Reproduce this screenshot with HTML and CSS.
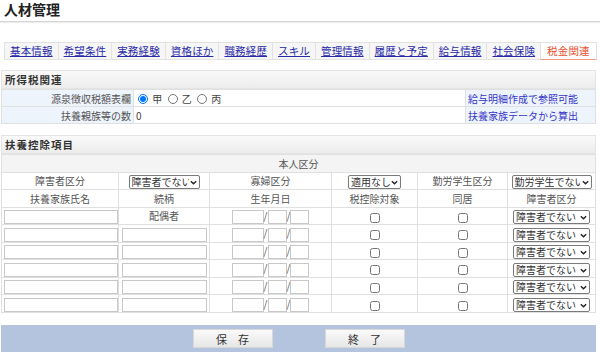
FILE: index.html
```html
<!DOCTYPE html>
<html>
<head>
    <title>人材管理</title>
    <link rel="stylesheet" href="styles.css">
</head>
<body>
    <!-- タイトル -->
    <div class="page-title">人材管理</div>

    <!-- タブ -->
    <ul class="tabs">
        <li><a href="#">基本情報</a></li>
        <li><a href="#">希望条件</a></li>
        <li><a href="#">実務経験</a></li>
        <li><a href="#">資格ほか</a></li>
        <li><a href="#">職務経歴</a></li>
        <li><a href="#">スキル</a></li>
        <li><a href="#">管理情報</a></li>
        <li><a href="#">履歴と予定</a></li>
        <li><a href="#">給与情報</a></li>
        <li><a href="#">社会保険</a></li>
        <li class="active"><span>税金関連</span></li>
    </ul>

    <!-- 所得税関連 -->
    <div class="section">
        <div class="section-head">所得税関連</div>
        <table class="info-table">
            <colgroup>
                <col class="c-label">
                <col>
                <col class="c-link">
            </colgroup>
            <tr>
                <th>源泉徴収税額表欄</th>
                <td>
                    <label><input type="radio" name="kou" checked> 甲</label>
                    <label><input type="radio" name="kou"> 乙</label>
                    <label><input type="radio" name="kou"> 丙</label>
                </td>
                <td class="link-cell"><a href="#">給与明細作成で参照可能</a></td>
            </tr>
            <tr>
                <th>扶養親族等の数</th>
                <td>0</td>
                <td class="link-cell"><a href="#">扶養家族データから算出</a></td>
            </tr>
        </table>
    </div>

    <!-- 扶養控除項目 -->
    <div class="section section-fuyou">
        <div class="section-head">扶養控除項目</div>
        <table class="grid-table">
            <colgroup>
                <col style="width:117px">
                <col style="width:91px">
                <col style="width:122px">
                <col style="width:86px">
                <col style="width:90px">
                <col>
            </colgroup>
            <tr class="row-gray">
                <td colspan="6">本人区分</td>
            </tr>
            <tr>
                <td>障害者区分</td>
                <td><span class="sel"><select class="sel-shogai"><option>障害者でない</option></select><svg viewBox="0 0 8 5"><path d="M1 1 L4 4 L7 1"/></svg></span></td>
                <td>寡婦区分</td>
                <td><span class="sel"><select class="sel-kafu"><option>適用なし</option></select><svg viewBox="0 0 8 5"><path d="M1 1 L4 4 L7 1"/></svg></span></td>
                <td>勤労学生区分</td>
                <td><span class="sel"><select class="sel-kinro"><option>勤労学生でない</option></select><svg viewBox="0 0 8 5"><path d="M1 1 L4 4 L7 1"/></svg></span></td>
            </tr>
            <tr>
                <td>扶養家族氏名</td>
                <td>続柄</td>
                <td>生年月日</td>
                <td>税控除対象</td>
                <td>同居</td>
                <td>障害者区分</td>
            </tr>
            <tr class="data-row">
                <td><input type="text" class="in-name"></td>
                <td>配偶者</td>
                <td><input type="text" class="in-y">/<input type="text" class="in-md">/<input type="text" class="in-md"></td>
                <td><input type="checkbox"></td>
                <td><input type="checkbox"></td>
                <td><span class="sel"><select class="sel-row"><option>障害者でない</option></select><svg viewBox="0 0 8 5"><path d="M1 1 L4 4 L7 1"/></svg></span></td>
            </tr>
            <tr class="data-row">
                <td><input type="text" class="in-name"></td>
                <td><input type="text" class="in-rel"></td>
                <td><input type="text" class="in-y">/<input type="text" class="in-md">/<input type="text" class="in-md"></td>
                <td><input type="checkbox"></td>
                <td><input type="checkbox"></td>
                <td><span class="sel"><select class="sel-row"><option>障害者でない</option></select><svg viewBox="0 0 8 5"><path d="M1 1 L4 4 L7 1"/></svg></span></td>
            </tr>
            <tr class="data-row">
                <td><input type="text" class="in-name"></td>
                <td><input type="text" class="in-rel"></td>
                <td><input type="text" class="in-y">/<input type="text" class="in-md">/<input type="text" class="in-md"></td>
                <td><input type="checkbox"></td>
                <td><input type="checkbox"></td>
                <td><span class="sel"><select class="sel-row"><option>障害者でない</option></select><svg viewBox="0 0 8 5"><path d="M1 1 L4 4 L7 1"/></svg></span></td>
            </tr>
            <tr class="data-row">
                <td><input type="text" class="in-name"></td>
                <td><input type="text" class="in-rel"></td>
                <td><input type="text" class="in-y">/<input type="text" class="in-md">/<input type="text" class="in-md"></td>
                <td><input type="checkbox"></td>
                <td><input type="checkbox"></td>
                <td><span class="sel"><select class="sel-row"><option>障害者でない</option></select><svg viewBox="0 0 8 5"><path d="M1 1 L4 4 L7 1"/></svg></span></td>
            </tr>
            <tr class="data-row">
                <td><input type="text" class="in-name"></td>
                <td><input type="text" class="in-rel"></td>
                <td><input type="text" class="in-y">/<input type="text" class="in-md">/<input type="text" class="in-md"></td>
                <td><input type="checkbox"></td>
                <td><input type="checkbox"></td>
                <td><span class="sel"><select class="sel-row"><option>障害者でない</option></select><svg viewBox="0 0 8 5"><path d="M1 1 L4 4 L7 1"/></svg></span></td>
            </tr>
            <tr class="data-row">
                <td><input type="text" class="in-name"></td>
                <td><input type="text" class="in-rel"></td>
                <td><input type="text" class="in-y">/<input type="text" class="in-md">/<input type="text" class="in-md"></td>
                <td><input type="checkbox"></td>
                <td><input type="checkbox"></td>
                <td><span class="sel"><select class="sel-row"><option>障害者でない</option></select><svg viewBox="0 0 8 5"><path d="M1 1 L4 4 L7 1"/></svg></span></td>
            </tr>
        </table>
    </div>

    <!-- ボタン -->
    <div class="button-bar">
        <button type="button">保　存</button>
        <button type="button">終　了</button>
    </div>
</body>
</html>
```

FILE: styles.css
```css
body {
    margin: 0;
    padding: 0;
    font-family: "Noto Sans CJK JP", "Noto Sans", sans-serif;
    font-size: 10px;
    color: #444;
}

/* タイトル */
.page-title {
    font-size: 14px;
    font-weight: bold;
    color: #222;
    padding: 0 4px;
    height: 21px;
    line-height: 18px;
    border-bottom: 1px solid #d4d4d4;
    box-shadow: 0 1px 1px #eee;
}

/* タブ */
.tabs {
    list-style: none;
    display: flex;
    margin: 20px 3px 0 4px;
    padding: 0;
    height: 18px;
}
.tabs li {
    flex-shrink: 0;
    white-space: nowrap;
    border: 1px solid #e2e2e2;
    border-right: none;
    background-color: #f6f6f6;
    padding: 0 5px;
    font-size: 10.5px;
    letter-spacing: 0.15px;
    line-height: 16px;
}
.tabs li:last-child {
    border-right: 1px solid #e2e2e2;
}
.tabs li a {
    color: #2a2aa8;
    text-decoration: underline;
}
.tabs li.active {
    background-color: #fff;
    color: #e8502c;
    border-bottom: 1px solid #f39a80;
    padding: 0 6px;
}

/* セクション */
.section {
    margin: 10px 4px 0 1px;
}
.section-fuyou {
    margin-top: 11px;
}
.section-head {
    font-size: 10.5px;
    font-weight: bold;
    color: #333;
    height: 17px;
    line-height: 17px;
    padding-left: 3px;
    border: 1px solid #e4e4e4;
    background: linear-gradient(#fafafa, #ececec);
    letter-spacing: 1px;
}

table {
    width: 100%;
    border-collapse: collapse;
    table-layout: fixed;
}
td, th {
    border: 1px solid #e0e0e0;
    padding: 0;
    height: 16px;
    font-weight: normal;
    white-space: nowrap;
}

/* 所得税関連 */
.info-table .c-label {
    width: 132px;
}
.info-table .c-link {
    width: 130px;
}
.info-table th {
    background-color: #eef4fc;
    text-align: right;
    padding-right: 2px;
    color: #555;
}
.info-table td {
    padding-left: 2px;
}
.info-table label {
    margin-right: 1px;
}
.info-table input[type="radio"] {
    width: 10px;
    height: 10px;
    margin: 0 2px 0 2px;
    vertical-align: -1px;
}
.link-cell {
    background-color: #eef4fc;
}
.link-cell a {
    color: #3636c8;
    text-decoration: none;
}

/* 扶養控除項目 */
.grid-table td {
    text-align: center;
    height: 16.5px;
    color: #555;
}
.grid-table .row-gray td {
    background-color: #f4f4f4;
}
.grid-table .data-row td {
    height: 16.6px;
}
.grid-table .data-row td:first-child {
    text-align: left;
    padding-left: 2px;
}

/* セレクト */
.sel {
    position: relative;
    display: inline-block;
    vertical-align: middle;
    line-height: 0;
}
.sel select {
    appearance: none;
    -webkit-appearance: none;
    font-family: inherit;
    font-size: 10px;
    height: 14px;
    line-height: 12px;
    padding: 0 10px 0 2px;
    margin: 0;
    border: 1px solid #7a7a7a;
    border-radius: 2px;
    background-color: #fff;
    color: #333;
    text-align: left;
}
.sel svg {
    position: absolute;
    right: 3px;
    top: 5px;
    width: 7px;
    height: 5px;
    fill: none;
    stroke: #222;
    stroke-width: 1.6;
}
.sel-shogai {
    width: 71px;
}
.sel-kafu {
    width: 53px;
}
.sel-kinro {
    width: 80px;
}
.sel-row {
    width: 77px;
}

input[type="text"] {
    height: 12px;
    padding: 0;
    border: 1px solid #c8c8c8;
    vertical-align: middle;
    margin: 0;
}
.in-name {
    width: 112px;
}
.in-rel {
    width: 83px;
}
.in-y {
    width: 30px;
}
.in-md {
    width: 17px;
}
input[type="checkbox"] {
    width: 10px;
    height: 10px;
    margin: 0;
    vertical-align: middle;
}

/* ボタン */
.button-bar {
    margin: 12px 4px 0 1px;
    height: 27px;
    background-color: #b4c4de;
    display: flex;
    justify-content: center;
    align-items: center;
    gap: 52px;
}
.button-bar button {
    width: 80px;
    height: 19px;
    border: 1px solid #d8d8d8;
    background: linear-gradient(#fafafa, #e6e6e6);
    font-family: inherit;
    font-size: 11px;
    color: #333;
    padding: 0;
}
```
